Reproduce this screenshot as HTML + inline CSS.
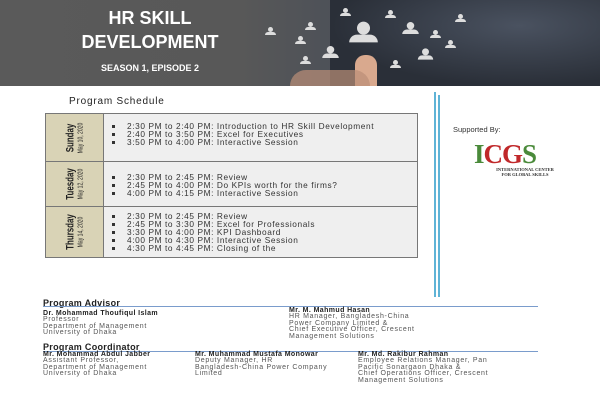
<!DOCTYPE html>
<html><head><style>
*{margin:0;padding:0;box-sizing:border-box}
body{width:600px;height:400px;background:#fff;position:relative;overflow:hidden;font-family:"Liberation Sans",sans-serif}
.banner{position:absolute;left:0;top:0;width:600px;height:86px;background:linear-gradient(90deg,#5a5a5a 0%,#585858 40%,#4a4f58 60%,#3e4450 80%,#2e333c 100%)}
.t{position:absolute;color:#fff;font-weight:bold;text-align:center;width:300px;left:0}
.p{position:absolute;width:11px;height:8px}
.p:before{content:"";position:absolute;left:3px;top:0;width:5px;height:5px;border-radius:50%;background:#ddd}
.p:after{content:"";position:absolute;left:0;top:5px;width:11px;height:3px;border-radius:3px 3px 0 0;background:#ddd}
table{position:absolute;left:45px;top:113px;width:373px;border-collapse:collapse;font-size:8.3px;color:#333;letter-spacing:.6px}
td{border:1px solid #777;vertical-align:top}
td.d{width:58px;background:#d9d3b6;vertical-align:middle;position:relative;letter-spacing:0}
td.c{background:#efefef;padding:8px 0 0 0}
td.c div{line-height:8px;height:8px;position:relative;padding-left:23px;white-space:nowrap}
td.c div:before{content:"";position:absolute;left:8px;top:3px;width:3px;height:3px;background:#333}
.dl{position:absolute;left:50%;top:50%;transform:translate(-50%,-50%) rotate(-90deg) scaleX(0.72);text-align:center;white-space:nowrap;color:#222}
.dl b{display:block;font-size:11px;line-height:12px}
.dl span{display:block;font-size:7px;line-height:9px}
.s{position:absolute;font-size:7px;color:#555;line-height:6.4px;letter-spacing:.7px;white-space:nowrap}
.s b{color:#222;letter-spacing:.4px}
h4{position:absolute;font-size:9px;color:#222;letter-spacing:.3px}
.ln{position:absolute;height:1px;background:#7a9ccc}
</style></head><body>
<div class="banner"></div>
<div style="position:absolute;left:330px;top:0;width:270px;height:86px;background:radial-gradient(ellipse at 70% 30%,#4a5260,#2a2f38 70%)"></div>
<div style="position:absolute;left:355px;top:55px;width:22px;height:31px;background:#d9a98e;border-radius:10px 10px 0 0"></div>
<div style="position:absolute;left:290px;top:70px;width:80px;height:16px;background:#bb8e78;border-radius:30px 30px 0 0;opacity:.7"></div>
<div class="p" style="left:358px;top:28px;transform:scale(2.6)"></div>
<div class="p" style="left:325px;top:48px;transform:scale(1.5)"></div>
<div class="p" style="left:405px;top:24px;transform:scale(1.5)"></div>
<div class="p" style="left:420px;top:50px;transform:scale(1.4)"></div>
<div class="p" style="left:305px;top:22px"></div>
<div class="p" style="left:295px;top:36px"></div>
<div class="p" style="left:265px;top:27px"></div>
<div class="p" style="left:300px;top:56px"></div>
<div class="p" style="left:430px;top:30px"></div>
<div class="p" style="left:445px;top:40px"></div>
<div class="p" style="left:390px;top:60px"></div>
<div class="p" style="left:340px;top:8px"></div>
<div class="p" style="left:385px;top:10px"></div>
<div class="p" style="left:455px;top:14px"></div>
<div class="t" style="top:8px;font-size:18px">HR SKILL</div>
<div class="t" style="top:32px;font-size:18px">DEVELOPMENT</div>
<div class="t" style="top:63px;font-size:9px">SEASON 1, EPISODE 2</div>

<div style="position:absolute;left:69px;top:96px;font-size:10px;letter-spacing:.8px;color:#222">Program Schedule</div>
<table>
<tr style="height:48px"><td class="d"><div class="dl"><b>Sunday</b><span>May 10, 2020</span></div></td><td class="c">
<div>2:30 PM to 2:40 PM: Introduction to HR Skill Development</div><div>2:40 PM to 3:50 PM: Excel for Executives</div><div>3:50 PM to 4:00 PM: Interactive Session</div></td></tr>
<tr style="height:45px"><td class="d"><div class="dl"><b>Tuesday</b><span>May 12, 2020</span></div></td><td class="c" style="padding-top:11px">
<div>2:30 PM to 2:45 PM: Review</div><div>2:45 PM to 4:00 PM: Do KPIs worth for the firms?</div><div>4:00 PM to 4:15 PM: Interactive Session</div></td></tr>
<tr style="height:51px"><td class="d"><div class="dl"><b>Thursday</b><span>May 14, 2020</span></div></td><td class="c" style="padding-top:5px">
<div>2:30 PM to 2:45 PM: Review</div><div>2:45 PM to 3:30 PM: Excel for Professionals</div><div>3:30 PM to 4:00 PM: KPI Dashboard</div><div>4:00 PM to 4:30 PM: Interactive Session</div><div>4:30 PM to 4:45 PM: Closing of the</div></td></tr>
</table>

<div style="position:absolute;left:434px;top:92px;width:2px;height:205px;background:#5fb3d6"></div>
<div style="position:absolute;left:438px;top:95px;width:2px;height:202px;background:#5fb3d6"></div>
<div style="position:absolute;left:453px;top:125px;font-size:7.5px;color:#333">Supported By:</div>
<div style="position:absolute;left:474px;top:141px;font-family:'Liberation Serif',serif;font-weight:bold;font-size:27px;letter-spacing:-1px;line-height:27px"><span style="color:#4a8a3a">I</span><span style="color:#c0282a">CG</span><span style="color:#4a8a3a">S</span></div>
<div style="position:absolute;left:470px;top:167px;width:110px;text-align:center;font-family:'Liberation Serif',serif;font-size:4.5px;font-weight:bold;line-height:5px;color:#333">INTERNATIONAL CENTER<br>FOR GLOBAL SKILLS</div>

<h4 style="left:43px;top:298px">Program Advisor</h4>
<div class="ln" style="left:43px;top:306px;width:495px"></div>
<div class="s" style="left:43px;top:311px"><b>Dr. Mohammad Thoufiqul Islam</b><br>Professor<br>Department of Management<br>University of Dhaka</div>
<div class="s" style="left:289px;top:308px"><b>Mr. M. Mahmud Hasan</b><br>HR Manager, Bangladesh-China<br>Power Company Limited &amp;<br>Chief Executive Officer, Crescent<br>Management Solutions</div>
<h4 style="left:43px;top:342px">Program Coordinator</h4>
<div class="ln" style="left:43px;top:351px;width:495px"></div>
<div class="s" style="left:43px;top:352px"><b>Mr. Mohammad Abdul Jabber</b><br>Assistant Professor,<br>Department of Management<br>University of Dhaka</div>
<div class="s" style="left:195px;top:352px"><b>Mr. Muhammad Mustafa Monowar</b><br>Deputy Manager, HR<br>Bangladesh-China Power Company<br>Limited</div>
<div class="s" style="left:358px;top:352px"><b>Mr. Md. Rakibur Rahman</b><br>Employee Relations Manager, Pan<br>Pacific Sonargaon Dhaka &amp;<br>Chief Operations Officer, Crescent<br>Management Solutions</div>
</body></html>
